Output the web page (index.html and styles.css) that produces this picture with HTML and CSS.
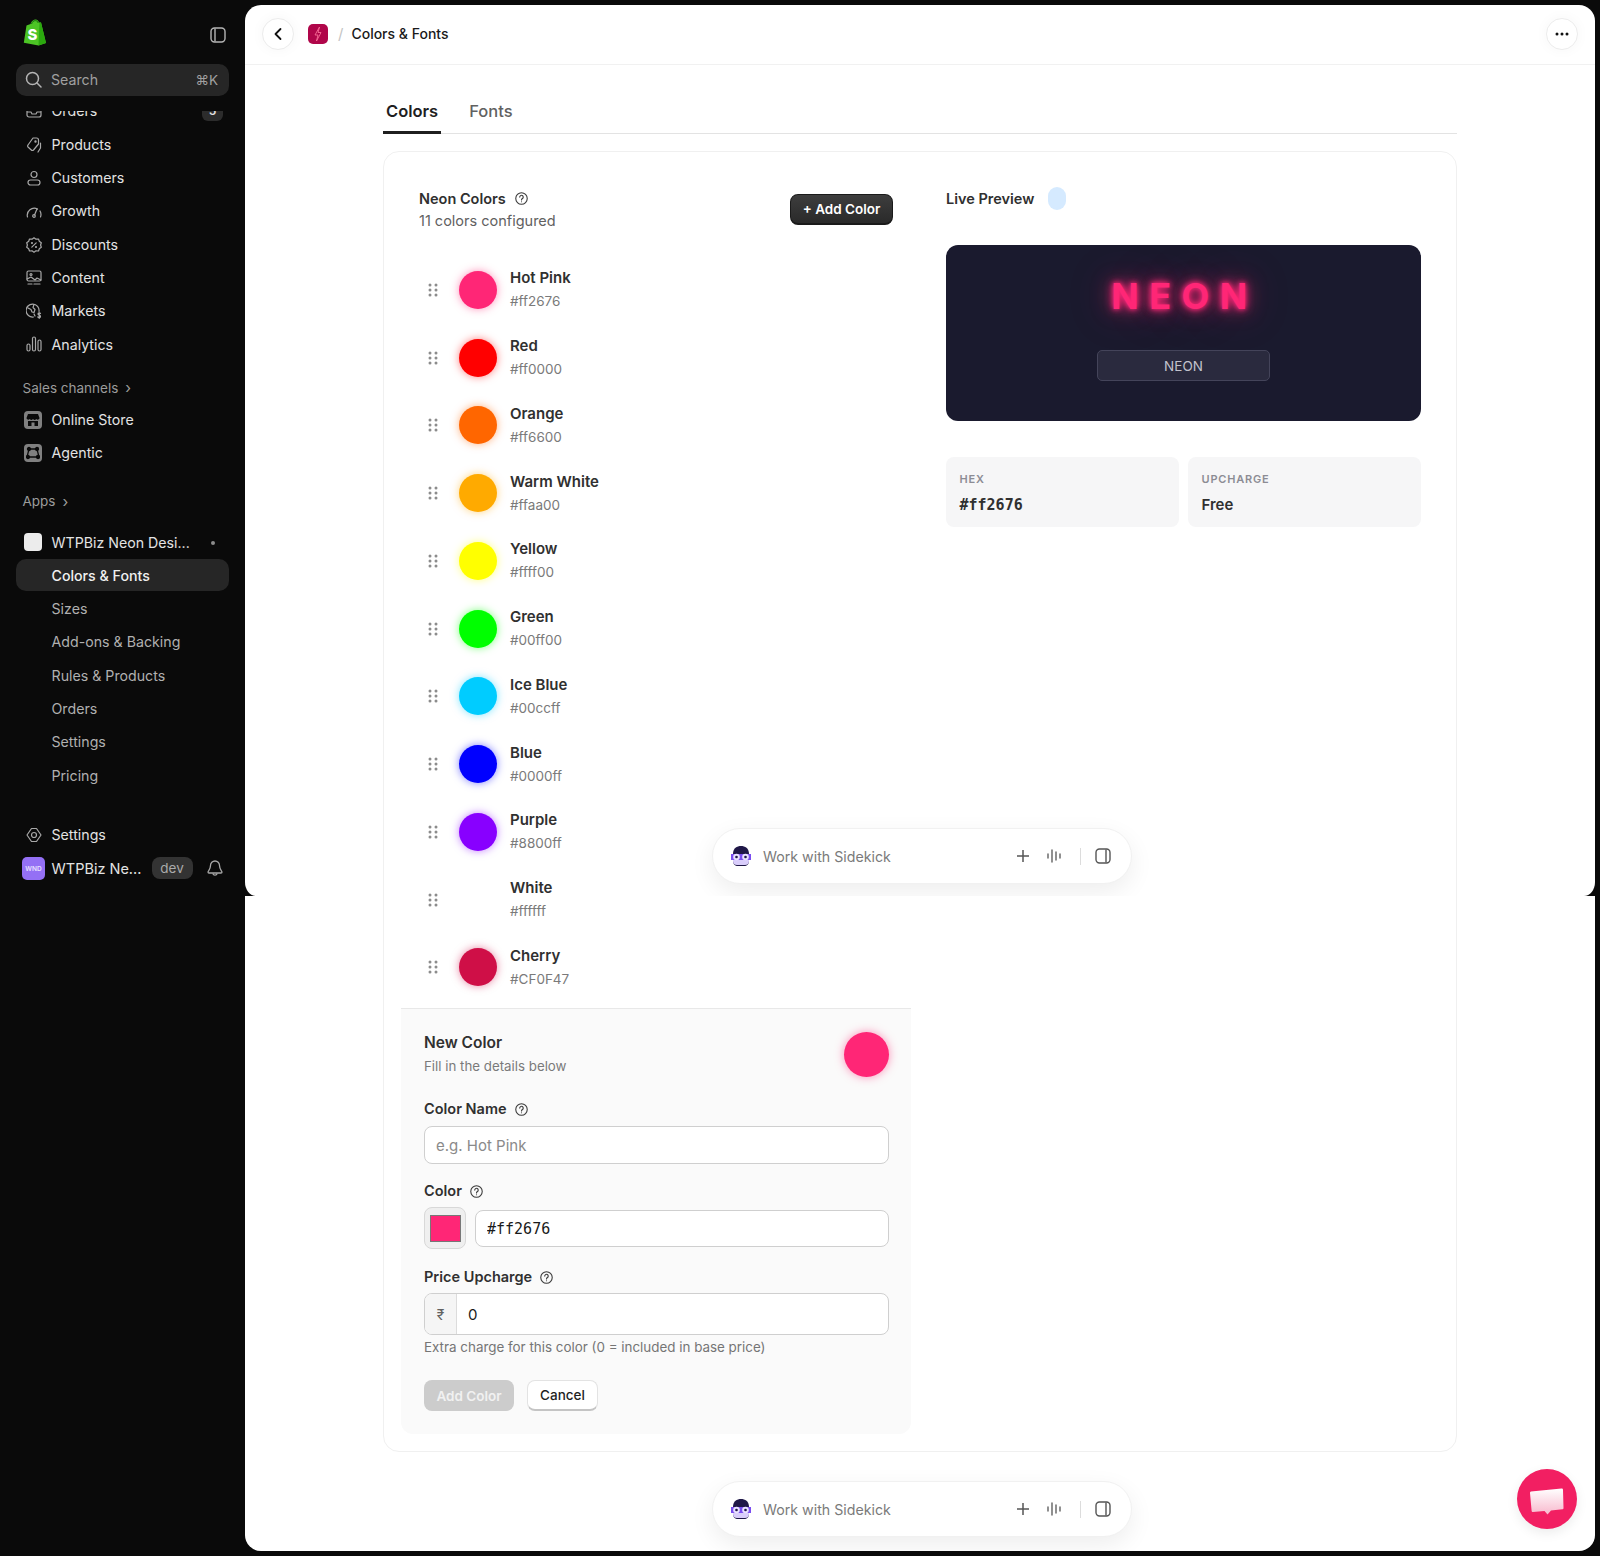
FILE: index.html
```html
<!DOCTYPE html>
<html lang="en">
<head>
    <meta charset="UTF-8">
    <meta name="viewport" content="width=device-width, initial-scale=1.0">
    <title>Colors &amp; Fonts</title>
    <link rel="stylesheet" href="styles.css">
</head>
<body>
    <aside class="sidebar">
        <div class="brand-row">
            <svg class="logo" width="24" height="27" viewBox="0 0 24 27">
                <path d="M3.500 6.500 L7.500 5 C8.500 2 10.500 .5 12.500 .5 C14.500 .5 15.500 2 16.300 3.600 L18 3.400 L23 24 L15.500 26.500 L.8 23.800 Z" fill="#4cc425"/>
                <path d="M18 3.400 L23 24 L15.500 26.500 L16.500 3.600 Z" fill="#2ba80e"/>
                <path d="M8.500 5 C9.300 2.800 10.600 1.600 12.500 1.600 C14 1.600 14.800 2.800 15.200 4" fill="none" stroke="#146b0c" stroke-width="1"/>
                <text x="4.500" y="20.500" class="logo-s">S</text>
            </svg>
            <svg class="toggle" width="16" height="16" viewBox="0 0 16 16" fill="none" stroke="#b5b5b5" stroke-width="1.400"><rect x="1" y="1" width="14" height="14" rx="3.500"/><path d="M5 1.500v13"/></svg>
        </div>
        <div class="search">
            <svg width="17" height="17" viewBox="0 0 17 17" fill="none" stroke="#b5b5b5" stroke-width="1.500" stroke-linecap="round"><circle cx="7.500" cy="7.500" r="6"/><path d="M12 12l4 4"/></svg>
            <span class="search-text">Search</span>
            <span class="search-key">⌘K</span>
        </div>
        <nav class="nav">
            <a class="nav-item first">
                <svg class="nav-icon" viewBox="0 0 16 16"><path d="M1 9V4a2 2 0 0 1 2-2h10a2 2 0 0 1 2 2v8a2 2 0 0 1-2 2H3a2 2 0 0 1-2-2V9h4l1 2h4l1-2h4"/></svg>
                Orders<span class="badge">5</span>
            </a>
            <a class="nav-item">
                <svg class="nav-icon" viewBox="0 0 16 16"><path d="M7 1h3.500a2 2 0 0 1 2 2v4l-5 6a1.500 1.500 0 0 1-2.200 0L2 10a1.500 1.500 0 0 1 0-2z"/><path d="M14.500 6v5l-2.500 4"/><circle cx="9.500" cy="4.500" r=".6"/></svg>
                Products
            </a>
            <a class="nav-item">
                <svg class="nav-icon" viewBox="0 0 16 16"><circle cx="8" cy="4.500" r="3"/><rect x="2" y="10" width="12" height="5" rx="2.500"/></svg>
                Customers
            </a>
            <a class="nav-item">
                <svg class="nav-icon" viewBox="0 0 16 16"><path d="M1.500 14a7 7 0 0 1 10-8M14 8a7 7 0 0 1 .5 6"/><path d="M11 6l-2.500 6"/><circle cx="8" cy="13" r="1.300"/></svg>
                Growth
            </a>
            <a class="nav-item">
                <svg class="nav-icon" viewBox="0 0 16 16"><path d="M8 .8l2 1.400 2.500-.2.800 2.300 2 1.500-.7 2.200.7 2.200-2 1.500-.8 2.300-2.500-.2-2 1.400-2-1.400-2.500.2-.8-2.300-2-1.500.7-2.200L.7 5.800l2-1.500.8-2.300 2.500.2z"/><path d="M5.800 10.200l4.400-4.400"/><circle cx="6" cy="6" r=".5"/><circle cx="10" cy="10" r=".5"/></svg>
                Discounts
            </a>
            <a class="nav-item">
                <svg class="nav-icon" viewBox="0 0 16 16"><rect x="1" y="1" width="14" height="10" rx="1.500"/><circle cx="5" cy="4.500" r="1"/><path d="M1 9l4-2 4 3 2-2 4 2M2 14h4M8 14h6"/></svg>
                Content
            </a>
            <a class="nav-item">
                <svg class="nav-icon" viewBox="0 0 16 16"><path d="M13 8.500A6.500 6.500 0 1 0 7.500 14"/><path d="M2 5l3 1.500 1 2.500 2 .5 1-3-2-2 1-3M9 13l-1-2"/><path d="M14.500 10.500c-.5-.8-2.500-.8-2.500.5s2.500 1 2.500 2.500-2 1.200-2.700.5M13.200 9.500v6"/></svg>
                Markets
            </a>
            <a class="nav-item">
                <svg class="nav-icon" viewBox="0 0 16 16"><rect x="1" y="8" width="3" height="7" rx="1.500"/><rect x="6.500" y="1" width="3" height="14" rx="1.500"/><rect x="12" y="4" width="3" height="11" rx="1.500"/></svg>
                Analytics
            </a>
            <div class="section-label sales">Sales channels <span class="chev">›</span></div>
            <a class="nav-item channel-first">
                <span class="tile">
                    <svg width="14" height="14" viewBox="0 0 14 14"><path d="M2 1h10l1.500 4a1.800 1.800 0 0 1-3.200 1 2.200 2.200 0 0 1-3.300 0 2.200 2.200 0 0 1-3.300 0A1.800 1.800 0 0 1 .5 5z" fill="#0a0a0a"/><path d="M2 8h10v5H8.500V9.500h-3V13H2z" fill="#0a0a0a"/></svg>
                </span>
                Online Store
            </a>
            <a class="nav-item">
                <span class="tile">
                    <svg width="14" height="14" viewBox="0 0 14 14" fill="none" stroke="#0a0a0a" stroke-width="1.300"><path d="M3 3h8l2 8H1z"/><circle cx="3" cy="3" r="1.500" fill="#0a0a0a"/><circle cx="11" cy="3" r="1.500" fill="#0a0a0a"/><circle cx="2" cy="11" r="1.500" fill="#0a0a0a"/><circle cx="12" cy="11" r="1.500" fill="#0a0a0a"/></svg>
                </span>
                Agentic
            </a>
            <div class="section-label apps">Apps <span class="chev">›</span></div>
            <a class="nav-item app-row">
                <span class="app-tile"></span>
                WTPBiz Neon Desi...
                <span class="dot"></span>
            </a>
            <a class="nav-item sub active">Colors &amp; Fonts</a>
            <a class="nav-item sub">Sizes</a>
            <a class="nav-item sub">Add-ons &amp; Backing</a>
            <a class="nav-item sub">Rules &amp; Products</a>
            <a class="nav-item sub">Orders</a>
            <a class="nav-item sub">Settings</a>
            <a class="nav-item sub">Pricing</a>
            <a class="nav-item settings">
                <svg class="nav-icon" viewBox="0 0 16 16"><path d="M5.500 1.500h5L15 8l-4.500 6.500h-5L1 8z"/><circle cx="8" cy="8" r="2.500"/></svg>
                Settings
            </a>
            <div class="nav-item store">
                <span class="store-tile">WND</span>
                <span class="store-name">WTPBiz Ne...</span>
                <span class="dev">dev</span>
                <svg class="bell" width="16" height="17" viewBox="0 0 16 17" fill="none" stroke="#a8a8a8" stroke-width="1.300"><path d="M8 1a4.500 4.500 0 0 0-4.500 4.500c0 4-2.500 5.500-2.500 6.500 0 .6.400 1 1 1h12c.6 0 1-.4 1-1 0-1-2.500-2.500-2.500-6.500A4.500 4.500 0 0 0 8 1z"/><path d="M5.800 13.500a2.300 2.300 0 0 0 4.400 0"/></svg>
            </div>
        </nav>
    </aside>

    <main class="main">
        <header class="topbar">
            <button class="round-btn">
                <svg width="12" height="14" viewBox="0 0 12 14" fill="none" stroke="#111" stroke-width="1.800" stroke-linecap="round" stroke-linejoin="round"><path d="M8.500 2L3.500 7l5 5"/></svg>
            </button>
            <span class="app-icon">
                <svg width="10" height="16" viewBox="0 0 10 16" fill="none" stroke="#ff7aa0" stroke-width=".8"><path d="M6.500 1L2 9h3l-1.500 6L8 6.500H5z"/></svg>
            </span>
            <span class="crumb-sep">/</span>
            <span class="crumb">Colors &amp; Fonts</span>
            <button class="round-btn more">
                <svg width="14" height="4" viewBox="0 0 14 4" fill="#111"><circle cx="2" cy="2" r="1.500"/><circle cx="7" cy="2" r="1.500"/><circle cx="12" cy="2" r="1.500"/></svg>
            </button>
        </header>

        <div class="content">
            <div class="tabs">
                <span class="tab active">Colors</span>
                <span class="tab">Fonts</span>
            </div>

            <section class="card">
                <div class="left-col">
                    <div class="list-head">
                        <div>
                            <div class="head-title">Neon Colors
                                <svg class="help" viewBox="0 0 12 12"><circle cx="6" cy="6" r="5.300"/><path d="M4.400 4.700a1.600 1.600 0 1 1 2.500 1.300c-.6.400-.9.700-.9 1.300"/><circle class="help-dot" cx="6" cy="9" r=".5"/></svg>
                            </div>
                            <div class="head-sub">11 colors configured</div>
                        </div>
                        <button class="add-btn">+ Add Color</button>
                    </div>

                    <div class="color-list" id="colorList"></div>

                    <div class="new-panel">
                        <div class="panel-head">
                            <div>
                                <div class="panel-title">New Color</div>
                                <div class="panel-sub">Fill in the details below</div>
                            </div>
                            <span class="panel-dot"></span>
                        </div>

                        <label class="field-label first-label">Color Name
                            <svg class="help" viewBox="0 0 12 12"><circle cx="6" cy="6" r="5.300"/><path d="M4.400 4.700a1.600 1.600 0 1 1 2.500 1.300c-.6.400-.9.700-.9 1.300"/><circle class="help-dot" cx="6" cy="9" r=".5"/></svg>
                        </label>
                        <input class="text-input name-input" type="text" placeholder="e.g. Hot Pink">

                        <label class="field-label">Color
                            <svg class="help" viewBox="0 0 12 12"><circle cx="6" cy="6" r="5.300"/><path d="M4.400 4.700a1.600 1.600 0 1 1 2.500 1.300c-.6.400-.9.700-.9 1.300"/><circle class="help-dot" cx="6" cy="9" r=".5"/></svg>
                        </label>
                        <div class="color-row">
                            <span class="swatch"><span class="swatch-fill"></span></span>
                            <input class="text-input hex-input" type="text" value="#ff2676">
                        </div>

                        <label class="field-label">Price Upcharge
                            <svg class="help" viewBox="0 0 12 12"><circle cx="6" cy="6" r="5.300"/><path d="M4.400 4.700a1.600 1.600 0 1 1 2.500 1.300c-.6.400-.9.700-.9 1.300"/><circle class="help-dot" cx="6" cy="9" r=".5"/></svg>
                        </label>
                        <div class="price-row">
                            <span class="price-prefix">₹</span>
                            <input class="price-input" type="text" value="0">
                        </div>
                        <div class="helper">Extra charge for this color (0 = included in base price)</div>

                        <div class="panel-actions">
                            <button class="btn-disabled">Add Color</button>
                            <button class="btn-cancel">Cancel</button>
                        </div>
                    </div>
                </div>

                <div class="right-col">
                    <div class="preview-head">Live Preview <span class="preview-pill"></span></div>
                    <div class="preview-box">
                        <div class="neon-text">NEON</div>
                        <div class="neon-input">NEON</div>
                    </div>
                    <div class="stats">
                        <div class="stat">
                            <div class="stat-label">HEX</div>
                            <div class="stat-value mono">#ff2676</div>
                        </div>
                        <div class="stat">
                            <div class="stat-label">UPCHARGE</div>
                            <div class="stat-value">Free</div>
                        </div>
                    </div>
                </div>
            </section>
        </div>

        <!-- upper capture ends at y 896, so its bar and shadow get cut there -->
        <div class="upper-layer">
            <div class="sidekick">
                <svg class="kick-face" width="22" height="22" viewBox="0 0 22 22"><path d="M3 9C3 3 7 1 11 1s8 2 8 8v7c0 3-2 5-5 5H8c-3 0-5-2-5-5z" fill="#1f1747"/><path d="M1 9h20v6H1z" fill="#7a4df0"/><path d="M3 15h16v1a4 4 0 0 1-4 4H7a4 4 0 0 1-4-4z" fill="#d9cdfb"/><circle cx="6.500" cy="12" r="3.300" fill="#e9e2ff"/><circle cx="15.500" cy="12" r="3.300" fill="#e9e2ff"/><circle cx="6.500" cy="12" r="1.300" fill="#1f1747"/><circle cx="15.500" cy="12" r="1.300" fill="#1f1747"/></svg>
                <span class="kick-text">Work with Sidekick</span>
                <svg class="kick-plus" width="12" height="12" viewBox="0 0 12 12" fill="none" stroke="#555" stroke-width="1.500"><path d="M6 0v12M0 6h12"/></svg>
                <svg class="kick-wave" width="14" height="14" viewBox="0 0 14 14" fill="none" stroke="#555" stroke-width="1.300" stroke-linecap="round"><path d="M1 5v4M5 1v12M9 3v8M13 5v4"/></svg>
                <span class="kick-div"></span>
                <svg width="16" height="16" viewBox="0 0 16 16" fill="none" stroke="#555" stroke-width="1.400"><rect x="1" y="1" width="14" height="14" rx="3.500"/><path d="M11 1.500v13"/></svg>
            </div>
        </div>
        <span class="notch notch-left"></span>
        <span class="notch notch-right"></span>

        <div class="sidekick lower">
            <svg class="kick-face" width="22" height="22" viewBox="0 0 22 22"><path d="M3 9C3 3 7 1 11 1s8 2 8 8v7c0 3-2 5-5 5H8c-3 0-5-2-5-5z" fill="#1f1747"/><path d="M1 9h20v6H1z" fill="#7a4df0"/><path d="M3 15h16v1a4 4 0 0 1-4 4H7a4 4 0 0 1-4-4z" fill="#d9cdfb"/><circle cx="6.500" cy="12" r="3.300" fill="#e9e2ff"/><circle cx="15.500" cy="12" r="3.300" fill="#e9e2ff"/><circle cx="6.500" cy="12" r="1.300" fill="#1f1747"/><circle cx="15.500" cy="12" r="1.300" fill="#1f1747"/></svg>
            <span class="kick-text">Work with Sidekick</span>
            <svg class="kick-plus" width="12" height="12" viewBox="0 0 12 12" fill="none" stroke="#555" stroke-width="1.500"><path d="M6 0v12M0 6h12"/></svg>
            <svg class="kick-wave" width="14" height="14" viewBox="0 0 14 14" fill="none" stroke="#555" stroke-width="1.300" stroke-linecap="round"><path d="M1 5v4M5 1v12M9 3v8M13 5v4"/></svg>
            <span class="kick-div"></span>
            <svg width="16" height="16" viewBox="0 0 16 16" fill="none" stroke="#555" stroke-width="1.400"><rect x="1" y="1" width="14" height="14" rx="3.500"/><path d="M11 1.500v13"/></svg>
        </div>

        <div class="chat-btn">
            <svg width="36" height="30" viewBox="0 0 36 30">
                <defs>
                    <linearGradient id="chatFill" x1="0" y1="0" x2="0" y2="1">
                        <stop offset="0" stop-color="#ffffff"/>
                        <stop offset="1" stop-color="#f8b9cd"/>
                    </linearGradient>
                </defs>
                <path d="M2 5.500L32.500 2.500c.9 0 1.500.5 1.500 1.400l.5 18c0 .8-.4 1.200-1.100 1.300L22 24.500 18.500 28.500 15.500 25 4 26c-.9 0-1.300-.4-1.400-1.200L1 7c0-.9.300-1.400 1-1.500z" fill="url(#chatFill)"/>
            </svg>
        </div>
    </main>

    <script>
        const colors = [
            ["Hot Pink", "#ff2676"],
            ["Red", "#ff0000"],
            ["Orange", "#ff6600"],
            ["Warm White", "#ffaa00"],
            ["Yellow", "#ffff00"],
            ["Green", "#00ff00"],
            ["Ice Blue", "#00ccff"],
            ["Blue", "#0000ff"],
            ["Purple", "#8800ff"],
            ["White", "#ffffff"],
            ["Cherry", "#CF0F47"]
        ];

        const dots = '<svg class="handle" width="10" height="14" viewBox="0 0 10 14" fill="#8c8c8c">'
            + '<circle cx="2" cy="2" r="1.500"/><circle cx="8" cy="2" r="1.500"/>'
            + '<circle cx="2" cy="7" r="1.500"/><circle cx="8" cy="7" r="1.500"/>'
            + '<circle cx="2" cy="12" r="1.500"/><circle cx="8" cy="12" r="1.500"/></svg>';

        document.getElementById("colorList").innerHTML = colors.map(function (c) {
            const dot = `<span class="color-dot" style="background-color: ${c[1]}; box-shadow: 0 0 8px ${c[1]}80;"></span>`;
            return `<div class="color-row-item">${dots}${dot}<div><div class="color-name">${c[0]}</div><div class="color-hex">${c[1]}</div></div></div>`;
        }).join("");
    </script>
</body>
</html>
```

FILE: styles.css
```css
* {
    box-sizing: border-box;
}

html, body {
    margin: 0;
    padding: 0;
}

body {
    font-family: Inter, "Noto Sans", sans-serif;
    background-color: #0a0a0a;
    display: flex;
    width: 1600px;
    height: 1556px;
    overflow: hidden;
    color: #303030;
}

button, input {
    font-family: inherit;
}

/* sidebar */
.sidebar {
    width: 245px;
    flex-shrink: 0;
    padding: 0 16px;
    color: #e3e3e3;
}

.brand-row {
    height: 64px;
    padding: 19px 3px 0 7px;
    display: flex;
    justify-content: space-between;
    align-items: flex-start;
}

.logo-s {
    font-family: Inter, sans-serif;
    font-weight: 800;
    font-size: 15px;
    fill: #fff;
}

.toggle {
    margin: 8px 0 0;
}

.search {
    height: 32px;
    background-color: #262626;
    border-radius: 10px;
    display: flex;
    align-items: center;
    padding: 0 11px 1px 9px;
    font-size: 14.200px;
    color: #a0a0a0;
}

.search-text {
    margin-left: 9px;
    flex: 1;
}

.search-key {
    font-size: 13.500px;
}

.nav {
    margin-top: 15px;
    height: 800px;
    overflow: hidden;
}

.nav-item {
    height: 33.300px;
    display: flex;
    align-items: center;
    padding-left: 35.500px;
    font-size: 14.200px;
    font-weight: 400;
    position: relative;
}

.nav-item.first {
    margin-top: -16.700px;
}

.nav-icon {
    position: absolute;
    left: 9.500px;
    top: 9px;
    width: 16px;
    height: 16px;
    fill: none;
    stroke: #a8a8a8;
    stroke-width: 1.200;
    stroke-linecap: round;
    stroke-linejoin: round;
}

.badge {
    margin-left: auto;
    margin-right: 6px;
    width: 21px;
    height: 20px;
    background-color: #2c2c2c;
    border-radius: 6px;
    font-size: 12px;
    font-weight: 600;
    display: flex;
    align-items: center;
    justify-content: center;
}

.section-label {
    height: 20px;
    padding-left: 6.500px;
    font-size: 13.500px;
    font-weight: 400;
    color: #9c9c9c;
    display: flex;
    align-items: center;
}

.chev {
    margin-left: 7px;
    font-size: 15px;
}

.sales {
    margin-top: 17px;
}

.channel-first {
    margin-top: 5.300px;
}

.apps {
    margin-top: 21.500px;
}

.app-row {
    margin-top: 14.300px;
}

.tile {
    position: absolute;
    left: 8px;
    top: 8px;
    width: 18px;
    height: 18px;
    border-radius: 4px;
    background-color: #808080;
    display: flex;
    align-items: center;
    justify-content: center;
}

.app-tile {
    position: absolute;
    left: 8px;
    top: 7.500px;
    width: 18px;
    height: 18px;
    border-radius: 4px;
    background-color: #ececec;
}

.dot {
    position: absolute;
    left: 195px;
    top: 15.500px;
    width: 4px;
    height: 4px;
    border-radius: 50%;
    background-color: #8c8c8c;
}

.nav-item.sub {
    color: #b0b0b0;
}

.nav-item.active {
    color: #f0f0f0;
    font-weight: 500;
}

.nav-item.active::before {
    content: "";
    position: absolute;
    left: 0;
    right: 0;
    top: 0.700px;
    bottom: 0.700px;
    background-color: #262626;
    border-radius: 10px;
    z-index: -1;
}

.settings {
    margin-top: 26.500px;
}

.store-tile {
    position: absolute;
    left: 6px;
    top: 5.500px;
    width: 23px;
    height: 23px;
    border-radius: 5px;
    background-color: #9470f5;
    color: #e9e2ff;
    font-size: 6.500px;
    font-weight: 600;
    display: flex;
    align-items: center;
    justify-content: center;
}

.store-name {
    width: 90px;
    flex-shrink: 0;
    font-size: 14.500px;
    white-space: nowrap;
}

.dev {
    margin-left: 10px;
    width: 41px;
    height: 22px;
    flex-shrink: 0;
    border-radius: 8px;
    background-color: #333;
    color: #aaa;
    font-size: 13.500px;
    display: flex;
    align-items: center;
    justify-content: center;
}

.bell {
    margin-left: 14px;
    flex-shrink: 0;
}

/* main window */
.main {
    width: 1350px;
    height: 1546px;
    margin-top: 5px;
    background-color: #fff;
    border-radius: 16px;
    position: relative;
    overflow: hidden;
}

.topbar {
    height: 60px;
    border-bottom: 1px solid #f1f1f1;
    display: flex;
    align-items: center;
    padding: 0 17px 2px 17px;
}

.round-btn {
    width: 32px;
    height: 32px;
    border-radius: 50%;
    border: 1px solid #ececec;
    background-color: #fff;
    box-shadow: 0 0 14px rgba(0, 0, 0, 0.04);
    display: flex;
    align-items: center;
    justify-content: center;
    padding: 0;
}

.round-btn.more {
    margin-left: auto;
}

.app-icon {
    margin-left: 14px;
    width: 20px;
    height: 20px;
    border-radius: 5px;
    background-color: #b0064a;
    display: flex;
    align-items: center;
    justify-content: center;
}

.crumb-sep {
    margin-left: 10px;
    color: #c4c4c4;
    font-size: 15px;
}

.crumb {
    margin-left: 8px;
    font-size: 14px;
    font-weight: 450;
    color: #1a1a1a;
}

.content {
    padding: 0 138px;
}

.tabs {
    height: 69px;
    border-bottom: 1px solid #e3e3e3;
    display: flex;
    align-items: flex-end;
    gap: 25px;
}

.tab {
    height: 40px;
    margin-bottom: -1px;
    padding: 5px 3px 0;
    font-size: 16.500px;
    font-weight: 500;
    color: #616161;
    line-height: 24px;
}

.tab.active {
    color: #1f1f1f;
    font-weight: 600;
    border-bottom: 3px solid #1f1f1f;
}

.card {
    margin-top: 17px;
    height: 1301px;
    border: 1px solid #f0f0f0;
    border-radius: 16px;
    padding: 19px 18px 18px 17px;
    display: flex;
}

.left-col {
    width: 510px;
    flex-shrink: 0;
}

.list-head {
    padding: 17.500px 18px 0 18px;
    display: flex;
    justify-content: space-between;
    align-items: flex-start;
}

.head-title {
    font-size: 14.500px;
    font-weight: 600;
    line-height: 20px;
    display: flex;
    align-items: center;
    gap: 9px;
}

.help {
    width: 13px;
    height: 13px;
    fill: none;
    stroke: #3a3a3a;
    stroke-width: 1;
    stroke-linecap: round;
}

.help-dot {
    fill: #3a3a3a;
    stroke: none;
}

.head-sub {
    margin-top: 2.500px;
    font-size: 14.500px;
    line-height: 20px;
    color: #616161;
}

.add-btn {
    margin-top: 5.500px;
    width: 103px;
    height: 31px;
    border-radius: 8px;
    border: 1px solid #1a1a1a;
    border-bottom-width: 2px;
    background: linear-gradient(#3d3d3d, #2a2a2a);
    color: #fff;
    font-size: 13.500px;
    font-weight: 600;
    padding: 0;
}

.color-list {
    margin-top: 25px;
}

.color-row-item {
    height: 67.750px;
    padding-left: 27px;
    display: flex;
    align-items: center;
}

.handle {
    flex-shrink: 0;
}

.color-dot {
    width: 38px;
    height: 38px;
    border-radius: 50%;
    margin: 0 13px 0 21px;
    flex-shrink: 0;
}

.color-name {
    font-size: 15px;
    font-weight: 600;
    line-height: 20px;
}

.color-hex {
    margin-top: 3px;
    font-size: 13.500px;
    line-height: 20px;
    color: #7a7a7a;
}

.new-panel {
    margin-top: 7px;
    height: 426px;
    padding: 23px 22px 0 23px;
    background-color: #fafafa;
    border-top: 1px solid #e8e8e8;
    border-radius: 0 0 12px 12px;
}

.panel-head {
    display: flex;
    justify-content: space-between;
    align-items: center;
}

.panel-title {
    font-size: 15.500px;
    font-weight: 600;
    line-height: 20px;
}

.panel-sub {
    margin-top: 3px;
    font-size: 13.300px;
    line-height: 20px;
    color: #7a7a7a;
}

.panel-dot {
    width: 45px;
    height: 45px;
    border-radius: 50%;
    background-color: #ff2676;
    box-shadow: 0 0 10px rgba(255, 38, 118, 0.5);
}

.field-label {
    margin-top: 17px;
    font-size: 14.500px;
    font-weight: 600;
    line-height: 20px;
    display: flex;
    align-items: center;
    gap: 8px;
}

.first-label {
    margin-top: 22px;
}

.text-input {
    width: 100%;
    border: 1px solid #cfcfcf;
    border-radius: 8px;
    background-color: #fff;
    padding: 0 11px;
    color: #1a1a1a;
    outline: none;
}

.name-input {
    height: 38px;
    margin-top: 7px;
    font-size: 15px;
}

.name-input::placeholder {
    color: #8a8a8a;
}

.color-row {
    margin-top: 6px;
    margin-bottom: 18px;
    height: 42px;
    display: flex;
    align-items: center;
    gap: 9px;
}

.swatch {
    width: 42px;
    height: 42px;
    flex-shrink: 0;
    border: 1px solid #d8d8d8;
    border-radius: 8px;
    background-color: #efefef;
    display: flex;
    align-items: center;
    justify-content: center;
}

.swatch-fill {
    width: 31px;
    height: 27px;
    background-color: #ff2676;
    border: 1px solid #777;
}

.hex-input {
    height: 37px;
    padding-top: 1px;
    font-family: "DejaVu Sans Mono", monospace;
    font-size: 15px;
}

.price-row {
    margin-top: 6px;
    height: 42px;
    border: 1px solid #cfcfcf;
    border-radius: 8px;
    background-color: #fff;
    display: flex;
    overflow: hidden;
}

.price-prefix {
    width: 32px;
    background-color: #f5f5f5;
    border-right: 1px solid #dcdcdc;
    color: #616161;
    font-size: 14px;
    display: flex;
    align-items: center;
    justify-content: center;
}

.price-input {
    flex: 1;
    border: none;
    outline: none;
    padding: 0 11px;
    font-size: 15px;
    color: #1a1a1a;
    background: none;
}

.helper {
    margin-top: 2px;
    font-size: 13.400px;
    line-height: 20px;
    color: #757575;
}

.panel-actions {
    margin-top: 23px;
    display: flex;
    gap: 13px;
}

.btn-disabled {
    width: 90px;
    height: 31px;
    border: none;
    border-radius: 8px;
    background-color: #cccccc;
    color: #f1f1f1;
    font-size: 13.500px;
    font-weight: 600;
    padding: 0;
}

.btn-cancel {
    width: 71px;
    height: 31px;
    border: 1px solid #e3e3e3;
    border-bottom: 2px solid #c4c4c4;
    border-radius: 8px;
    background-color: #fff;
    color: #1f1f1f;
    font-size: 13.500px;
    font-weight: 500;
    padding: 0;
}

.right-col {
    flex: 1;
    padding: 17.500px 17px 0 35px;
}

.preview-head {
    height: 20px;
    font-size: 14.500px;
    font-weight: 600;
    line-height: 20px;
    display: flex;
    align-items: center;
    gap: 14px;
}

.preview-pill {
    width: 18px;
    height: 23px;
    border-radius: 9px;
    background-color: #d5eaff;
}

.preview-box {
    margin-top: 36.500px;
    height: 176px;
    background-color: #1a1a2e;
    border-radius: 12px;
    display: flex;
    flex-direction: column;
    align-items: center;
    padding-top: 27px;
}

.neon-text {
    padding-left: 2px;
    font-size: 36px;
    font-weight: 700;
    line-height: 48px;
    letter-spacing: 10.500px;
    color: #ff2676;
    text-shadow: 0 0 5px #ff2676, 0 0 10px #ff2676, 0 0 20px rgba(255, 38, 118, 0.7), 0 0 45px rgba(255, 38, 118, 0.4);
}

.neon-input {
    margin-top: 30px;
    width: 173px;
    height: 31px;
    border: 1px solid #44445a;
    border-radius: 5px;
    background-color: #2a2a3e;
    color: #c2c2cc;
    font-size: 13.500px;
    display: flex;
    align-items: center;
    justify-content: center;
}

.stats {
    margin-top: 36px;
    display: flex;
    gap: 9px;
}

.stat {
    flex: 1;
    height: 70px;
    background-color: #f6f6f7;
    border-radius: 8px;
    padding: 13px 13px 0 13.500px;
}

.stat-label {
    font-size: 11px;
    font-weight: 600;
    letter-spacing: 0.800px;
    line-height: 18px;
    color: #8c8c94;
}

.stat-value {
    margin-top: 6px;
    font-size: 15px;
    font-weight: 600;
    line-height: 22px;
}

.stat-value.mono {
    font-family: "DejaVu Sans Mono", monospace;
    font-weight: 700;
}

/* floating stuff */
.upper-layer {
    position: absolute;
    top: 0;
    left: 0;
    right: 0;
    height: 891px;
    overflow: hidden;
}

.sidekick {
    position: absolute;
    left: 467px;
    bottom: 12px;
    width: 420px;
    height: 56px;
    border-radius: 28px;
    border: 1px solid #f1f1f1;
    background-color: #fff;
    box-shadow: 0 8px 24px rgba(0, 0, 0, 0.07);
    display: flex;
    align-items: center;
    padding: 0 20px 0 17px;
}

.sidekick.lower {
    bottom: 14px;
}

.kick-text {
    margin-left: 11px;
    flex: 1;
    font-size: 14.200px;
    color: #7a7a7a;
}

.kick-wave {
    margin-left: 18px;
}

.kick-div {
    width: 1px;
    height: 17px;
    background-color: #dcdcdc;
    margin: 0 14px 0 19px;
}

.notch {
    position: absolute;
    top: 877px;
    width: 11px;
    height: 14px;
    background-color: #0a0a0a;
}

.notch::before {
    content: "";
    position: absolute;
    inset: 0;
    background-color: #fff;
}

.notch-left {
    left: 0;
}

.notch-left::before {
    border-radius: 0 0 0 11px / 0 0 0 14px;
}

.notch-right {
    right: 0;
}

.notch-right::before {
    border-radius: 0 0 11px 0 / 0 0 14px 0;
}

.chat-btn {
    position: absolute;
    right: 18px;
    bottom: 22px;
    width: 60px;
    height: 60px;
    border-radius: 50%;
    background-color: #f21f62;
    box-shadow: 0 4px 12px rgba(0, 0, 0, 0.08);
    display: flex;
    align-items: center;
    justify-content: center;
    padding-top: 3px;
}
```
